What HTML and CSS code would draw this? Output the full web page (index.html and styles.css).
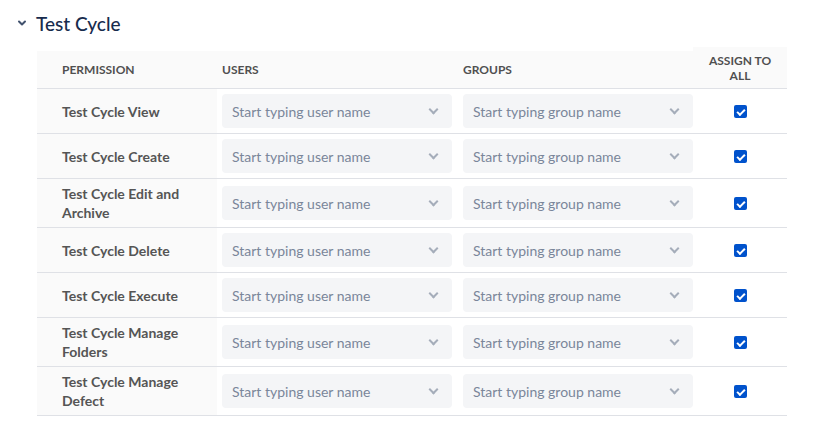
FILE: index.html
```html
<!DOCTYPE html>
<html lang="en">
<head>
    <meta charset="UTF-8">
    <title>Test Cycle Permissions</title>
    <link rel="stylesheet" href="styles.css">
</head>
<body>

<div class="section">
    <div class="section-title">
        <svg class="chevron" width="10" height="10" viewBox="0 0 10 10"><path d="M2 3.5 L5 6.5 L8 3.5" fill="none" stroke="#42526e" stroke-width="2" stroke-linecap="round" stroke-linejoin="round"/></svg>
        <h2>Test Cycle</h2>
    </div>

    <div class="perm-table">
        <div class="th th-perm">Permission</div>
        <div class="th">Users</div>
        <div class="th">Groups</div>
        <div class="th th-all">Assign to all</div>

        <div class="td td-perm">Test Cycle View</div>
        <div class="td"><div class="picker">Start typing user name<span class="caret"></span></div></div>
        <div class="td"><div class="picker">Start typing group name<span class="caret"></span></div></div>
        <div class="td td-all"><span class="check"></span></div>

        <div class="td td-perm">Test Cycle Create</div>
        <div class="td"><div class="picker">Start typing user name<span class="caret"></span></div></div>
        <div class="td"><div class="picker">Start typing group name<span class="caret"></span></div></div>
        <div class="td td-all"><span class="check"></span></div>

        <div class="td td-perm">Test Cycle Edit and Archive</div>
        <div class="td"><div class="picker">Start typing user name<span class="caret"></span></div></div>
        <div class="td"><div class="picker">Start typing group name<span class="caret"></span></div></div>
        <div class="td td-all"><span class="check"></span></div>

        <div class="td td-perm">Test Cycle Delete</div>
        <div class="td"><div class="picker">Start typing user name<span class="caret"></span></div></div>
        <div class="td"><div class="picker">Start typing group name<span class="caret"></span></div></div>
        <div class="td td-all"><span class="check"></span></div>

        <div class="td td-perm">Test Cycle Execute</div>
        <div class="td"><div class="picker">Start typing user name<span class="caret"></span></div></div>
        <div class="td"><div class="picker">Start typing group name<span class="caret"></span></div></div>
        <div class="td td-all"><span class="check"></span></div>

        <div class="td td-perm">Test Cycle Manage Folders</div>
        <div class="td"><div class="picker">Start typing user name<span class="caret"></span></div></div>
        <div class="td"><div class="picker">Start typing group name<span class="caret"></span></div></div>
        <div class="td td-all"><span class="check"></span></div>

        <div class="td td-perm">Test Cycle Manage Defect</div>
        <div class="td"><div class="picker">Start typing user name<span class="caret"></span></div></div>
        <div class="td"><div class="picker">Start typing group name<span class="caret"></span></div></div>
        <div class="td td-all"><span class="check"></span></div>
    </div>
</div>

</body>
</html>
```

FILE: styles.css
```css
body {
    margin: 0;
    font-family: 'Lato', 'Noto Sans', sans-serif;
    background: #fff;
    color: #172b4d;
}
.section {
    padding: 11px 0 0 17px;
}
.section-title {
    display: flex;
    align-items: center;
    gap: 9px;
    height: 24px;
}
.chevron {
    display: block;
}
h2 {
    margin: 0;
    font-size: 19px;
    font-weight: 500;
    color: #172b4d;
}
.perm-table {
    display: grid;
    grid-template-columns: 180px 241px 235px 94px;
    width: 750px;
    margin: 12px 0 0 20px;
    align-items: stretch;
}
.th {
    align-self: end;
    background: #fafafa;
    height: 37px;
    display: flex;
    align-items: center;
    padding-left: 5px;
    font-size: 12px;
    font-weight: 700;
    text-transform: uppercase;
    color: #505050;
    border-bottom: 1px solid #dfe1e6;
}
.th-perm {
    padding-left: 25px;
}
.th-all {
    height: 41px;
    justify-content: center;
    text-align: center;
    padding: 0 10px;
    line-height: 15px;
}
.td {
    display: flex;
    align-items: center;
    padding: 5px 0 5px 5px;
    min-height: 34px;
    border-bottom: 1px solid #dfe1e6;
}
.td-perm {
    background: #fafafa;
    padding: 5px 20px 5px 25px;
    font-size: 14px;
    font-weight: 700;
    line-height: 19px;
    color: #555;
}
.td-all {
    justify-content: center;
    padding-left: 0;
}
.picker {
    position: relative;
    width: 230px;
    height: 34px;
    box-sizing: border-box;
    background: #f4f5f7;
    border-radius: 4px;
    padding-left: 10px;
    display: flex;
    align-items: center;
    font-size: 14px;
    color: #7a869a;
}
.caret {
    position: absolute;
    right: 15px;
    top: 12px;
    width: 5px;
    height: 5px;
    border-right: 2px solid #a5adba;
    border-bottom: 2px solid #a5adba;
    transform: rotate(45deg);
}
.check {
    position: relative;
    width: 13px;
    height: 13px;
    border-radius: 2px;
    background: #0052cc;
}
.check::after {
    content: '';
    position: absolute;
    left: 3px;
    top: 4px;
    width: 6px;
    height: 3px;
    border-left: 2px solid #fff;
    border-bottom: 2px solid #fff;
    transform: rotate(-45deg);
}
```
